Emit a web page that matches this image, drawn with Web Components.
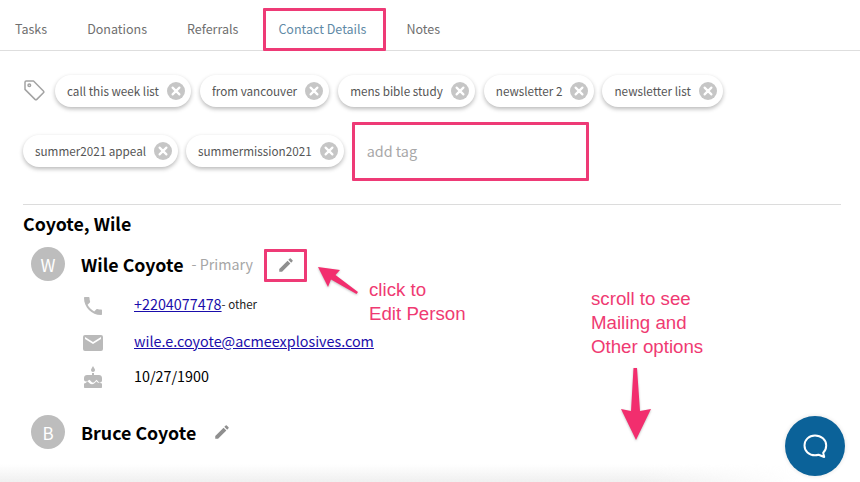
<!DOCTYPE html>
<html lang="en"><head><meta charset="utf-8"><title>Contact Details</title>
<style>
html,body{margin:0;padding:0;background:#fff}
body{width:860px;height:482px;overflow:hidden;position:relative;font-family:"Noto Sans CJK JP","Noto Sans",sans-serif;color:#000}
</style></head><body>
<contact-page></contact-page>
<script>
const PENCIL='<path d="M3 17.25V21h3.75L17.81 9.94l-3.75-3.75L3 17.25zM20.71 7.04a1 1 0 0 0 0-1.41l-2.34-2.34a1 1 0 0 0-1.41 0l-1.83 1.83 3.75 3.75 1.83-1.83z"/>';
function def(name,html,init){
  customElements.define(name,class extends HTMLElement{
    constructor(){super();this.attachShadow({mode:'open'}).innerHTML=html;}
    connectedCallback(){if(init)init(this,this.shadowRoot);}
  });
}
def('tab-bar',`<style>:host{display:flex;height:50px;border-bottom:1px solid #dedede;padding-left:15px;gap:40px;align-items:center;box-sizing:content-box;font-size:12.5px;color:#6f6f6f;line-height:20px}</style><slot></slot>`);
def('tab-item',`<style>:host{display:block;padding-top:8px}:host([active]){color:#5f8aa6}</style><slot></slot>`);
def('tag-chip',`<style>:host{display:inline-flex;align-items:center;height:32px;box-sizing:border-box;padding:0 6px 0 12px;border-radius:16px;background:#fff;box-shadow:0 2px 4px rgba(0,0,0,.28);font-size:11.7px;color:#555;line-height:20px;white-space:nowrap;gap:8px}svg{width:18px;height:18px;flex:none}</style><slot></slot><svg viewBox="0 0 18 18"><circle cx="9" cy="9" r="9" fill="#c6c6c6"/><path d="M5.6 5.6l6.8 6.8M12.4 5.6l-6.8 6.8" stroke="#fff" stroke-width="2.2" stroke-linecap="round"/></svg>`);
def('tag-area',`<style>:host{display:block;margin:24px 0 0 23px;height:129px}
.row{display:flex;align-items:center;height:32px}.one{gap:9px}.two{margin-top:28px;gap:8px}
svg.t{width:22px;height:22px;flex:none;margin:0 1px 2px 0}
.add{width:237px;padding-left:15px;box-sizing:border-box;font-size:14.4px;color:#a8a8a8;line-height:32px}
</style><div class="row one"><svg class="t" viewBox="0 0 22 22" fill="none" stroke="#a3a3a3" stroke-width="1.5" stroke-linejoin="round"><path d="M2 3.2a1.2 1.2 0 0 1 1.2-1.2h7.3L20.4 12a1.3 1.3 0 0 1 0 1.8l-6.6 6.6a1.3 1.3 0 0 1-1.8 0L2 10.4z"/><circle cx="6.3" cy="6.3" r="1.3"/></svg><tag-chip>call this week list</tag-chip><tag-chip>from vancouver</tag-chip><tag-chip>mens bible study</tag-chip><tag-chip>newsletter 2</tag-chip><tag-chip style="margin-left:-1px">newsletter list</tag-chip></div>
<div class="row two"><tag-chip>summer2021 appeal</tag-chip><tag-chip>summermission2021</tag-chip><div class="add">add tag</div></div>`);
def('person-row',`<style>:host{display:flex;align-items:center;height:34px;padding-left:31px}
.av{width:34px;height:34px;border-radius:50%;background:#bdbdbd;color:#fff;font-size:17px;display:flex;align-items:center;justify-content:center;line-height:1;margin-right:16px;flex:none}
.n{font-size:17.8px;font-weight:700;line-height:24px;white-space:nowrap}
.s{font-size:14.3px;color:#a6a6a6;margin-left:8px;line-height:24px;white-space:nowrap}
svg{width:18px;height:18px;fill:#8f8f8f;flex:none}
</style><div class="av"></div><span class="n"></span><span class="s"></span><svg viewBox="0 0 24 24">${PENCIL}</svg>`,(el,r)=>{
  r.querySelector('.av').textContent=el.getAttribute('initial');
  r.querySelector('.n').textContent=el.getAttribute('name');
  const s=r.querySelector('.s');s.textContent=el.getAttribute('role')||'';
  const g=r.querySelector('svg');g.style.marginLeft=(el.getAttribute('gap')||'17')+'px';
  g.style.marginTop=(el.getAttribute('drop')||'0')+'px';
});
def('contact-line',`<style>:host{display:flex;align-items:center;height:24px;padding-left:81px;font-size:14.35px;line-height:24px;white-space:nowrap}
.i{width:24px;height:24px;margin-right:29px;flex:none;display:block;position:relative;top:2px}
::slotted(a){color:#1a0dab;text-decoration:underline}
</style><span class="i"><slot name="icon"></slot></span><slot></slot>`);
def('contact-page',`<style>:host{display:block;height:482px;position:relative;overflow:hidden}
.sep{height:1px;background:#dcdcdc;margin:0 19px 0 23px}
h2{margin:6px 0 0 23px;font-size:17.8px;font-weight:700;line-height:24px}
.lines{display:flex;flex-direction:column;margin-top:11px}
.lines contact-line:nth-child(2){margin-top:13px}
.lines contact-line:nth-child(3){margin-top:11px}
.lines svg{width:24px;height:24px;fill:#bababa;display:block}
.other{font-size:11.5px;color:#222}
a{color:#1a0dab}
person-row.a{margin-top:12px}
person-row.b{margin-top:27px}
.fade{position:absolute;left:0;right:60px;bottom:0;height:18px;background:linear-gradient(to bottom,rgba(240,240,240,0),rgba(236,236,236,.8));-webkit-mask-image:linear-gradient(to right,#000 80%,transparent);mask-image:linear-gradient(to right,#000 80%,transparent)}
.chat{position:absolute;left:785px;top:416px;width:60px;height:60px;border-radius:50%;background:#0b6299;display:flex;align-items:center;justify-content:center;box-shadow:0 0 4px rgba(0,0,0,.12)}
.box{position:absolute;box-sizing:border-box;border:3px solid #ee3a76;border-radius:1px}
.note{position:absolute;font-family:"Liberation Sans",Arial,sans-serif;color:#ef3a72;font-size:18.7px;line-height:24px;white-space:nowrap}
svg.ar{position:absolute;overflow:visible;filter:drop-shadow(0 1px 1px rgba(0,0,0,.25))}
</style>
<tab-bar><tab-item>Tasks</tab-item><tab-item>Donations</tab-item><tab-item>Referrals</tab-item><tab-item active>Contact Details</tab-item><tab-item>Notes</tab-item></tab-bar>
<tag-area></tag-area>
<div class="sep"></div>
<h2>Coyote, Wile</h2>
<person-row class="a" initial="W" name="Wile Coyote" role="- Primary" gap="24" drop="2"></person-row>
<div class="lines">
<contact-line><svg slot="icon" viewBox="0 0 24 24"><path d="M6.6 10.8c1.4 2.8 3.8 5.1 6.6 6.6l2.2-2.2c.3-.3.7-.4 1-.2 1.1.4 2.3.6 3.6.6.6 0 1 .4 1 1V20c0 .6-.4 1-1 1C10.6 21 3 13.4 3 4c0-.6.4-1 1-1h3.5c.6 0 1 .4 1 1 0 1.3.2 2.5.6 3.6.1.3 0 .7-.2 1z"/></svg><a href="#">+2204077478</a><span class="other">- other</span></contact-line>
<contact-line><svg slot="icon" viewBox="0 0 24 24"><path d="M20 4H4a2 2 0 0 0-2 2v12a2 2 0 0 0 2 2h16a2 2 0 0 0 2-2V6a2 2 0 0 0-2-2zm0 4l-8 5-8-5V6l8 5 8-5z"/></svg><a href="#">wile.e.coyote@acmeexplosives.com</a></contact-line>
<contact-line><svg slot="icon" viewBox="0 0 24 24"><path d="M12 6c1.1 0 2-.9 2-2 0-.4-.1-.7-.3-1L12 0l-1.7 3c-.2.3-.3.6-.3 1 0 1.1.9 2 2 2zm6 3h-5V7h-2v2H6c-1.700 0-3 1.300-3 3v1.500c0 1.100.9 2 2 2 .5 0 1-.2 1.400-.6L8.500 13.800l2.100 2.100c.8.8 2 .8 2.800 0l2.100-2.100 2.100 2.100c.4.4.9.6 1.400.6 1.100 0 2-.9 2-2V12c0-1.700-1.300-3-3-3zm-1 7.700l-1.500-1.500-2.100 2.100c-1.300 1.300-3.500 1.300-4.800 0l-2.100-2.100L5 16.700c-.6.5-1.300.8-2 .8V21c0 .6.4 1 1 1h16c.6 0 1-.4 1-1v-3.500c-.7 0-1.400-.3-2-.8z"/></svg>10/27/1900</contact-line>
</div>
<person-row class="b" initial="B" name="Bruce Coyote" gap="9"></person-row>
<div class="fade"></div>
<div class="chat"><svg width="26" height="26" viewBox="0 0 26 26" fill="none" stroke="#fff" stroke-width="2" stroke-linejoin="round"><path d="M13 2.500C6.900 2.500 2.500 6.800 2.500 12.400S6.900 22.300 13 22.300c1.300 0 2.500-.2 3.600-.5l5.600 2.200-1-4.300c1.900-1.800 3-4.300 3-7.300C24.200 6.800 19.100 2.500 13 2.500z"/></svg></div>
<div class="box" style="left:263px;top:8px;width:123px;height:43px"></div>
<div class="box" style="left:352px;top:122px;width:237px;height:59px"></div>
<div class="box" style="left:264px;top:249px;width:43px;height:33px"></div>
<div class="note" style="left:369px;top:278px">click to<br>Edit Person</div>
<div class="note" style="left:591px;top:287px">scroll to see<br>Mailing and<br>Other options</div>
<svg class="ar" style="left:316px;top:264px" width="46" height="34" viewBox="0 0 46 34"><path d="M2 3L24 6L19.500 11L42 28L40.500 30L15 15.500L12 23z" fill="#f22e6e"/></svg>
<svg class="ar" style="left:620px;top:366px" width="32" height="76" viewBox="0 0 32 76"><path d="M13.500 2L17 2L20 45L31 43L16 74L1 43L11 45z" fill="#f22e6e"/></svg>`);
</script>
</body></html>
